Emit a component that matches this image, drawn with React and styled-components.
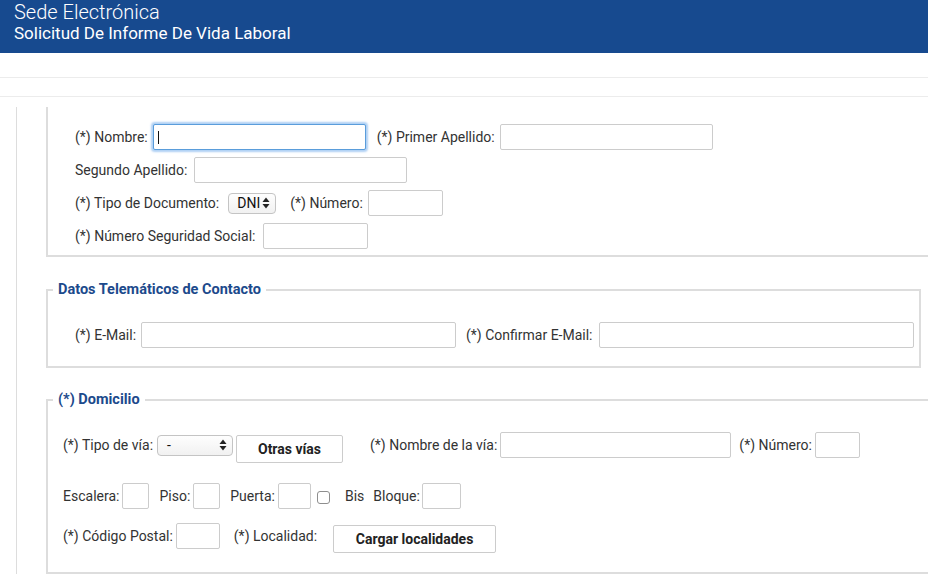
import React from 'react';
import styled, { createGlobalStyle } from 'styled-components';

const GlobalStyle = createGlobalStyle`
  html, body {
    margin: 0;
    padding: 0;
    background: #fff;
    overflow: hidden;
  }
  body {
    font-family: Roboto, 'Liberation Sans', Arial, sans-serif;
    font-size: 14px;
    color: #333;
  }
`;

const Page = styled.div`
  width: 928px;
  height: 574px;
  overflow: hidden;
`;

const Header = styled.header`
  height: 53px;
  background: #174a8f;
  color: #fff;
  padding: 1px 0 0 14px;
  box-sizing: border-box;
`;

const Title = styled.div`
  font-size: 20px;
  font-weight: 300;
  line-height: 22px;
`;

const Subtitle = styled.div`
  font-size: 17px;
  line-height: 20px;
`;

const Strip = styled.div`
  height: ${(p) => p.$h}px;
  border-bottom: 1px solid #ececec;
`;

const Main = styled.main`
  margin: 10px 0 0 16px;
  border-left: 1px solid #ddd;
  padding-left: 29px;
  height: 480px;
`;

const Box = styled.fieldset`
  margin: 0 0 ${(p) => p.$gap || 0}px;
  padding: ${(p) => p.$pad};
  border: 2px solid #ddd;
  border-top: ${(p) => (p.$open ? 'none' : '2px solid #ddd')};
  width: ${(p) => p.$w}px;
  box-sizing: border-box;
  min-width: 0;
`;

const Legend = styled.legend`
  margin-left: ${(p) => p.$ml}px;
  padding: 0 5px;
  font-size: 14.5px;
  line-height: 20px;
  font-weight: 700;
  color: #1c4a8c;
`;

const Row = styled.div`
  display: flex;
  align-items: center;
  height: ${(p) => p.$h || 26}px;
  margin-bottom: ${(p) => p.$mb || 0}px;
`;

const Label = styled.label`
  white-space: nowrap;
  margin-right: ${(p) => p.$mr ?? 6}px;
  line-height: 17px;
`;

const Input = styled.input`
  width: ${(p) => p.$w}px;
  height: 26px;
  box-sizing: border-box;
  border: 1px solid #ccc;
  border-radius: 2px;
  background: #fff;
  padding: 0 4px;
  font: inherit;
  outline: none;
  margin-right: ${(p) => p.$mr || 0}px;
  ${(p) =>
    p.$focus &&
    `
    border-color: #5a9ddb;
    box-shadow: 0 0 2px 2px rgba(110, 170, 235, 0.55);
  `}
`;

const FocusWrap = styled.div`
  position: relative;
  display: flex;
`;

const Caret = styled.span`
  position: absolute;
  left: 5px;
  top: 7px;
  width: 1px;
  height: 13px;
  background: #111;
`;

const Select = styled.div`
  display: inline-flex;
  align-items: center;
  justify-content: space-between;
  width: ${(p) => p.$w}px;
  height: 21px;
  box-sizing: border-box;
  padding: 0 5px 0 ${(p) => p.$pl || 8}px;
  border: 1px solid #c4c4c4;
  border-radius: 4px;
  background: linear-gradient(#fefefe, #f1f1f1);
  color: #111;
  font-size: 14px;
  margin-right: ${(p) => p.$mr || 0}px;
`;

const Button = styled.button`
  width: ${(p) => p.$w}px;
  height: 28px;
  margin-top: ${(p) => p.$mt || 0}px;
  margin-right: ${(p) => p.$mr || 0}px;
  border: 1px solid #ccc;
  border-radius: 2px;
  background: #fff;
  font-family: Roboto, 'Liberation Sans', Arial, sans-serif;
  font-size: 14px;
  font-weight: 700;
  color: #222;
  padding: 0;
`;

const Check = styled.span`
  display: inline-block;
  width: 11px;
  height: 11px;
  border: 1px solid #8e8e8e;
  border-radius: 3px;
  background: #fff;
  margin: 3px 15px 0 6px;
`;

const Arrows = () => (
  <svg width="8" height="12" viewBox="0 0 8 12">
    <path d="M4 0.5 L7.5 5 L0.5 5 Z" fill="#222" />
    <path d="M0.5 7 L7.5 7 L4 11.5 Z" fill="#222" />
  </svg>
);

export default function App() {
  return (
    <Page>
      <GlobalStyle />
      <Header>
        <Title>Sede Electrónica</Title>
        <Subtitle>Solicitud De Informe De Vida Laboral</Subtitle>
      </Header>
      <Strip $h={24} />
      <Strip $h={18} />
      <Main>
        <Box $open $w={920} $pad="17px 0 6px 27px" $gap={23}>
          <Row $mb={7}>
            <Label $mr={5}>(*) Nombre:</Label>
            <FocusWrap>
              <Input $w={213} $focus $mr={11} />
              <Caret />
            </FocusWrap>
            <Label $mr={5}>(*) Primer Apellido:</Label>
            <Input $w={213} />
          </Row>
          <Row $mb={7}>
            <Label $mr={7}>Segundo Apellido:</Label>
            <Input $w={213} />
          </Row>
          <Row $mb={7}>
            <Label $mr={9}>(*) Tipo de Documento:</Label>
            <Select $w={48} $mr={14}>
              DNI
              <Arrows />
            </Select>
            <Label $mr={5}>(*) Número:</Label>
            <Input $w={75} />
          </Row>
          <Row>
            <Label $mr={8}>(*) Número Seguridad Social:</Label>
            <Input $w={105} />
          </Row>
        </Box>

        <Box $w={875} $pad="22px 0 18px 27px" $gap={22}>
          <Legend $ml={-22}>Datos Telemáticos de Contacto</Legend>
          <Row>
            <Label $mr={5}>(*) E-Mail:</Label>
            <Input $w={315} $mr={10} />
            <Label $mr={6}>(*) Confirmar E-Mail:</Label>
            <Input $w={315} />
          </Row>
        </Box>

        <Box $w={920} $pad="17px 0 20px 15px">
          <Legend $ml={-10}>(*) Domicilio</Legend>
          <Row $h={36} $mb={20}>
            <Label $mr={4}>(*) Tipo de vía:</Label>
            <Select $w={76} $pl={9} $mr={3}>
              -
              <Arrows />
            </Select>
            <Button $w={107} $mt={8} $mr={27}>Otras vías</Button>
            <Label $mr={3}>(*) Nombre de la vía:</Label>
            <Input $w={231} $mr={8} />
            <Label $mr={3}>(*) Número:</Label>
            <Input $w={45} />
          </Row>
          <Row $mb={11}>
            <Label $mr={3}>Escalera:</Label>
            <Input $w={27} $mr={10} />
            <Label $mr={3}>Piso:</Label>
            <Input $w={27} $mr={10} />
            <Label $mr={3}>Puerta:</Label>
            <Input $w={33} />
            <Check />
            <Label $mr={9}>Bis</Label>
            <Label $mr={2}>Bloque:</Label>
            <Input $w={39} />
          </Row>
          <Row $h={32}>
            <Label $mr={3}>(*) Código Postal:</Label>
            <Input $w={44} $mr={14} />
            <Label $mr={16}>(*) Localidad:</Label>
            <Button $w={163} $mt={6}>Cargar localidades</Button>
          </Row>
        </Box>
      </Main>
    </Page>
  );
}
